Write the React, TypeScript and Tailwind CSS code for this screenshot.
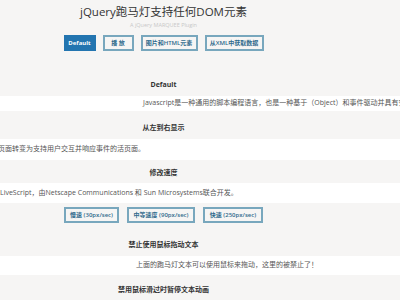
import React from "react";

const font = { fontFamily: '"Open Sans", "Noto Sans CJK SC", sans-serif' };

function Btn({ label, w, primary }: { label: string; w: string; primary?: boolean }) {
  return (
    <div
      className={
        primary
          ? `${w} h-[16px] flex items-center justify-center bg-[#2375b0] text-white text-[6px] font-bold`
          : `${w} h-[16px] flex items-center justify-center border-2 border-[#78a7bd] text-[#2f6a8c] text-[6px] font-semibold whitespace-nowrap`
      }
    >
      {label}
    </div>
  );
}

function Heading({ text, mt }: { text: string; mt: string }) {
  return (
    <div className={`w-[327px] ${mt} text-center text-[7px] leading-[14px] font-bold text-[#333]`}>{text}</div>
  );
}

function Band({ text, mt, h, pl }: { text: string; mt: string; h: string; pl: string }) {
  return (
    <div className={`w-full ${mt} ${h} bg-white overflow-hidden flex items-center`}>
      <div className={`${pl} whitespace-nowrap text-[7px] text-[#555]`}>{text}</div>
    </div>
  );
}

export default function App() {
  return (
    <div className="w-[400px] h-[300px] overflow-hidden bg-[#f6f5f4] flex flex-col" style={font}>
      <div className="w-[327px] pt-[4px] text-center text-[11.5px] leading-[16px] text-[#333]">
        jQuery跑马灯支持任何DOM元素
      </div>
      <div className="w-[327px] text-center text-[5.5px] leading-[10px] text-[#c8c8c8]">A jQuery MARQUEE Plugin</div>
      <div className="w-[327px] mt-[5px] flex justify-center gap-[7px]">
        <Btn label="Default" w="w-[32px]" primary />
        <Btn label="播 放" w="w-[31px]" />
        <Btn label="图片和HTML元素" w="w-[57px]" />
        <Btn label="从XML中获取数据" w="w-[59px]" />
      </div>

      <Heading text="Default" mt="mt-[27px]" />
      <Band
        mt="mt-[4px]"
        h="h-[15px]"
        pl="pl-[143px]"
        text="Javascript是一种通用的脚本编程语言，也是一种基于（Object）和事件驱动并具有安全性能的脚本语言。"
      />

      <Heading text="从左到右显示" mt="mt-[10px]" />
      <Band mt="mt-[4px]" h="h-[21px]" pl="ml-[-2px]" text="页面转变为支持用户交互并响应事件的活页面。" />

      <Heading text="修改速度" mt="mt-[6px]" />
      <Band
        mt="mt-[3px]"
        h="h-[20px]"
        pl="pl-0"
        text="LiveScript，由Netscape Communications 和 Sun Microsystems联合开发。"
      />
      <div className="w-[327px] mt-[4px] flex justify-center gap-[8px]">
        <Btn label="慢速 (30px/sec)" w="w-[55px]" />
        <Btn label="中等速度 (90px/sec)" w="w-[68px]" />
        <Btn label="快速 (250px/sec)" w="w-[60px]" />
      </div>

      <Heading text="禁止使用鼠标拖动文本" mt="mt-[15px]" />
      <Band mt="mt-[4px]" h="h-[19px]" pl="pl-[136px]" text="上面的跑马灯文本可以使用鼠标来拖动，这里的被禁止了！" />

      <Heading text="禁用鼠标滑过时暂停文本动画" mt="mt-[8px]" />
    </div>
  );
}
